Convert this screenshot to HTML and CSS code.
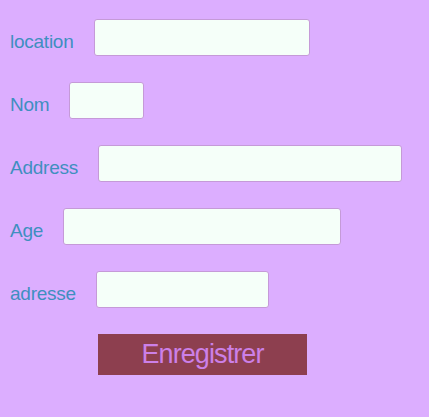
FILE: index.html
```html
<!DOCTYPE html>
<html>
<head>
<meta charset="utf-8">
<link rel="stylesheet" href="styles.css">
</head>
<body>
<form class="form">
  <div class="row"><label class="label">location</label><input class="field w-location" type="text"></div>
  <div class="row"><label class="label">Nom</label><input class="field w-nom" type="text"></div>
  <div class="row"><label class="label">Address</label><input class="field w-address" type="text"></div>
  <div class="row"><label class="label">Age</label><input class="field w-age" type="text"></div>
  <div class="row"><label class="label">adresse</label><input class="field w-adresse" type="text"></div>
  <div class="actions"><button class="submit" type="button">Enregistrer</button></div>
</form>
</body>
</html>
```
FILE: styles.css
```css
html, body {
  margin: 0;
  padding: 0;
  background: #dcaeff;
  height: 100%;
}
.form {
  display: flex;
  flex-direction: column;
  gap: 26px;
  padding: 19px 0 0 10px;
  font-family: "Liberation Sans", Arial, sans-serif;
}
.row {
  display: flex;
  align-items: center;
  gap: 20px;
  height: 37px;
}
.label {
  font-size: 19px;
  color: #3f8fc0;
  padding-top: 9px;
  letter-spacing: -0.25px;
}
.field {
  box-sizing: border-box;
  height: 37px;
  margin: 0;
  background: #f5fff9;
  border: 1px solid #c59ad8;
  border-radius: 3px;
  outline: none;
}
.w-location { width: 216px; }
.w-nom { width: 75px; }
.w-address { width: 304px; }
.w-age { width: 278px; }
.w-adresse { width: 173px; }
.actions {
  display: flex;
  padding-left: 88px;
}
.submit {
  box-sizing: border-box;
  width: 209px;
  height: 41px;
  margin: 0;
  padding: 0;
  border: none;
  background: #8d3f4f;
  color: #cc80e8;
  font-family: "Liberation Sans", Arial, sans-serif;
  font-size: 27px;
  letter-spacing: -0.9px;
}
```
